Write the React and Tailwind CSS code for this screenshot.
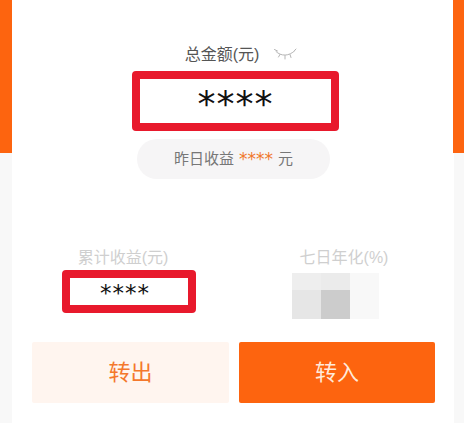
import React from "react";

const font = { };

function Eye() {
  return (
    <svg width="24" height="14" viewBox="0 0 24 14" fill="none" stroke="#b5b5b5" strokeWidth="1" strokeLinecap="round" className="ml-[14px]">
      <path d="M3 3.5 C8 8.5 16 8.5 22 2.5" />
      <path d="M1.5 1.5 L4.5 3" />
      <path d="M7 6.5 L5.5 9" />
      <path d="M12 7.5 L12 11" />
      <path d="M17 6.5 L18 9.5" />
      <path d="M21.5 2.5 L23 1" />
    </svg>
  );
}

export default function App() {
  return (
    <div className="flex w-[464px] h-[423px] overflow-hidden bg-[#f8f8f8] font-['Liberation_Sans','Noto_Sans_CJK_SC',sans-serif]">
      <div className="w-3 shrink-0">
        <div className="h-[153px] bg-[#fd640f]" />
      </div>
      <main className="w-[442px] shrink-0 bg-white flex flex-col">
        <div className="flex items-center justify-center h-5 mt-[45px] ml-[16px] text-[16px] text-[#555555]">
          <span>总金额(元)</span>
          <Eye />
        </div>
        <div className="flex items-center justify-center w-[207px] h-[60px] mt-[6px] ml-[120px] border-[8px] border-[#e8192c] rounded-[4px] bg-white">
          <span className="text-[36px] leading-none tracking-[1px] text-[#111111] font-['DejaVu_Sans',sans-serif] mt-[6px]">****</span>
        </div>
        <div className="flex items-center justify-center gap-[5px] w-[193px] h-10 mt-2 ml-[125px] rounded-full bg-[#f6f5f6] text-[15px] text-[#777777]">
          <span>昨日收益</span>
          <span className="text-[#f0782c] text-[17px] font-['DejaVu_Sans',sans-serif] mt-[2px]">****</span>
          <span>元</span>
        </div>
        <div className="flex mt-[67px] h-5 text-[16px] text-[#cfcfcf]">
          <div className="w-[222px] text-center">累计收益(元)</div>
          <div className="w-[220px] pl-[-1px] text-center">七日年化(%)</div>
        </div>
        <div className="flex mt-[4px] h-[49px]">
          <div className="flex items-center justify-center w-[134px] h-[43px] ml-[50px] border-[8px] border-[#e8192c] rounded-[4px] bg-white">
            <span className="text-[23px] leading-none tracking-[1px] text-[#111111] font-['DejaVu_Sans',sans-serif] -ml-[8px] mt-[4px]">****</span>
          </div>
          <div className="flex flex-col h-[46px] w-[87px] ml-[96px] mt-[3px]">
            <div className="flex h-[17px]">
              <div className="w-[29px] bg-[#eeeeee]" />
              <div className="w-[29px] bg-[#ebebeb]" />
              <div className="w-[29px] bg-[#f8f8f8]" />
            </div>
            <div className="flex h-[29px]">
              <div className="w-[29px] bg-[#e6e6e6]" />
              <div className="w-[29px] bg-[#cccccc]" />
              <div className="w-[29px] bg-[#f8f8f8]" />
            </div>
          </div>
        </div>
        <div className="flex gap-[10px] mt-[23px] ml-5">
          <button className="flex items-center justify-center w-[197px] h-[61px] rounded-[2px] bg-[#fff5ef] text-[22px] text-[#f4782c]">转出</button>
          <button className="flex items-center justify-center w-[196px] h-[61px] rounded-[2px] bg-[#fd640f] text-[22px] text-[#ffeadb]">转入</button>
        </div>
      </main>
      <div className="w-[10px] shrink-0 bg-[#f8f8f8]">
        <div className="h-[153px] -ml-[1px] bg-[#fd640f]" />
      </div>
    </div>
  );
}
